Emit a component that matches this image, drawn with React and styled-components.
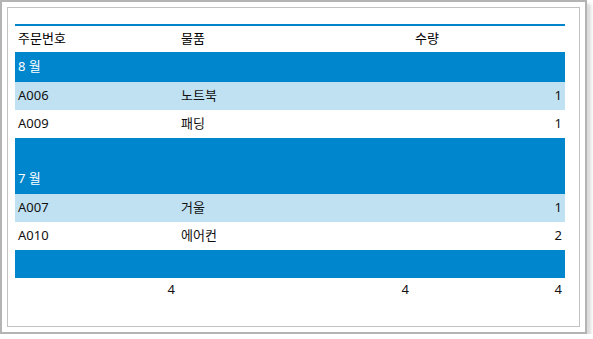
import React from 'react'
import styled, { createGlobalStyle } from 'styled-components'

const GlobalStyle = createGlobalStyle`
  body {
    margin: 0;
    background: #fff;
    font-family: "Noto Sans", "Noto Sans CJK KR", sans-serif;
  }
`

/* outer window frame with the soft drop shadow */
const Frame = styled.div`
  width: 573px;
  height: 320px;
  border: 2px solid #b4b4b4;
  box-shadow: 4px 4px 3px #dcdcdc;
  background: #fff;
  padding: 5px;
`
const Panel = styled.div`
  height: 100%;
  border: 1px solid #c2c2c2;
  padding: 16px 14px 0 7px;
  box-sizing: border-box;
`
const Grid = styled.table`
  width: 550px;
  border-collapse: collapse;
  table-layout: fixed;
  border-top: 2px solid #0085cc;
  font-size: 13px;
  line-height: 16px;
  color: #111;
`
const HeadCell = styled.th`
  height: 27px;
  padding: 0 3px 3px;
  box-sizing: border-box;
  text-align: left;
  font-weight: normal;
  color: #000;
`
const GroupRow = styled.tr`
  background: #0086cd;
  color: #fff;
  height: ${p => p.$h}px;
`
const GroupCell = styled.td`
  padding: 0 3px ${p => p.$pb || 0}px;
`
const DataRow = styled.tr`
  height: 28px;
  background: ${p => (p.$alt ? '#c0e1f2' : '#fff')};
`
const Cell = styled.td`
  padding: 0 3px 2px;
  text-align: ${p => (p.$right ? 'right' : 'left')};
`
const TotalRow = styled.tr`
  height: 24px;
`

const groups = [
  { month: '8 월', items: [['A006', '노트북', 1], ['A009', '패딩', 1]] },
  { month: '7 월', items: [['A007', '거울', 1], ['A010', '에어컨', 2]] },
]

function App() {
  return (
    <>
      <GlobalStyle />
      <Frame>
        <Panel>
          <Grid>
            <colgroup>
              <col style={{ width: 163 }} />
              <col style={{ width: 234 }} />
              <col style={{ width: 153 }} />
            </colgroup>
            <thead>
              <tr>
                <HeadCell>주문번호</HeadCell>
                <HeadCell>물품</HeadCell>
                <HeadCell>수량</HeadCell>
              </tr>
            </thead>
            <tbody>
              {groups.map((g, gi) => (
                <React.Fragment key={g.month}>
                  {gi > 0 && (
                    <GroupRow $h={26}>
                      <GroupCell colSpan={3} />
                    </GroupRow>
                  )}
                  <GroupRow $h={30}>
                    <GroupCell colSpan={3} $pb={2}>{g.month}</GroupCell>
                  </GroupRow>
                  {g.items.map(([id, name, qty], i) => (
                    <DataRow key={id} $alt={i % 2 === 0}>
                      <Cell>{id}</Cell>
                      <Cell>{name}</Cell>
                      <Cell $right>{qty}</Cell>
                    </DataRow>
                  ))}
                </React.Fragment>
              ))}
              <GroupRow $h={28}>
                <GroupCell colSpan={3} />
              </GroupRow>
              <TotalRow>
                <Cell $right>4</Cell>
                <Cell $right>4</Cell>
                <Cell $right>4</Cell>
              </TotalRow>
            </tbody>
          </Grid>
        </Panel>
      </Frame>
    </>
  )
}

export default App
